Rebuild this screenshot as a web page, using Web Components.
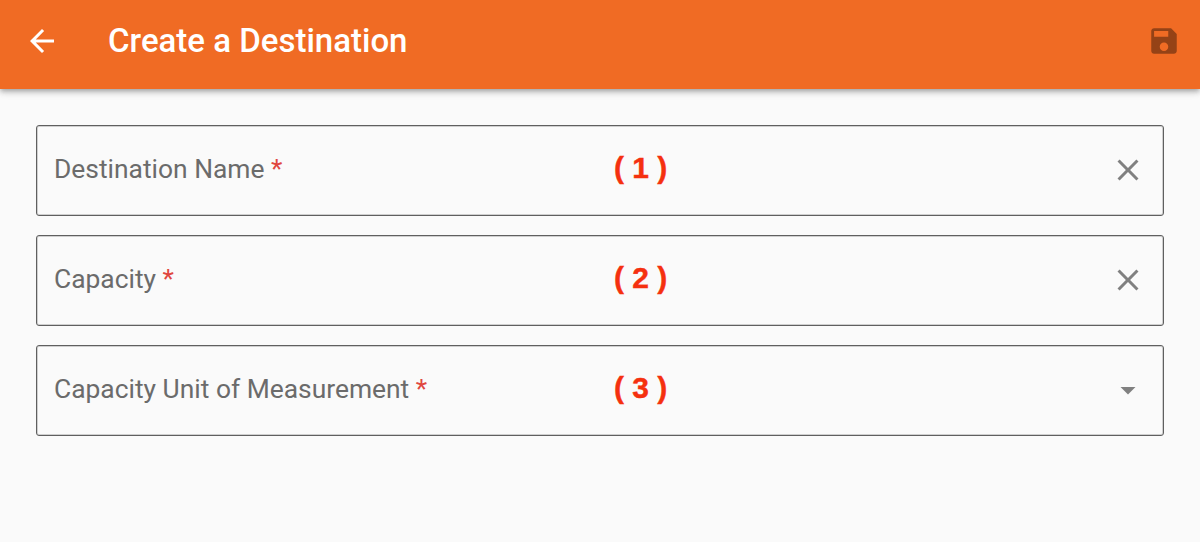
<!DOCTYPE html>
<html>
<head>
<meta charset="utf-8">
<title>Create a Destination</title>
<style>
  html, body { height: 100%; }
  body {
    margin: 0;
    background: #fafafa;
    font-family: Roboto, 'Liberation Sans', sans-serif;
    overflow: hidden;
  }
</style>
</head>
<body>
<app-bar>Create a Destination</app-bar>
<form-body>
  <form-field label="Destination Name" mark="( 1 )" trailing="clear"></form-field>
  <form-field label="Capacity" mark="( 2 )" trailing="clear"></form-field>
  <form-field label="Capacity Unit of Measurement" mark="( 3 )" trailing="dropdown"></form-field>
</form-body>

<template id="app-bar-tmpl">
  <style>
    :host {
      display: flex;
      align-items: center;
      height: 89px;
      padding: 0 24px 8px 24px;
      box-sizing: border-box;
      background: #f06b24;
      color: #fff;
      box-shadow: 0 2px 4px -1px rgba(0,0,0,.2), 0 4px 5px 0 rgba(0,0,0,.14), 0 1px 10px 0 rgba(0,0,0,.12);
      position: relative;
    }
    .back { width: 36px; height: 36px; display: block; fill: #fff; flex: none; }
    .title {
      margin-left: 48px;
      flex: 1;
      font-size: 33px;
      font-weight: 500;
      white-space: nowrap;
    }
    .save { width: 34px; height: 34px; display: block; fill: rgba(0,0,0,.38); flex: none; margin-right: -5px; }
  </style>
  <svg class="back" viewBox="0 0 24 24"><path d="M20 11H7.83l5.59-5.59L12 4l-8 8 8 8 1.41-1.41L7.83 13H20v-2z"/></svg>
  <span class="title"><slot></slot></span>
  <svg class="save" viewBox="0 0 24 24"><path d="M17 3H5c-1.11 0-2 .9-2 2v14c0 1.1.89 2 2 2h14c1.1 0 2-.9 2-2V7l-4-4zm-5 16c-1.66 0-3-1.34-3-3s1.34-3 3-3 3 1.34 3 3-1.34 3-3 3zm3-10H5V5h10v4z"/></svg>
</template>

<template id="form-body-tmpl">
  <style>
    :host {
      display: flex;
      flex-direction: column;
      gap: 19.5px;
      padding: 36px 36px 0;
    }
  </style>
  <slot></slot>
</template>

<template id="form-field-tmpl">
  <style>
    :host {
      display: grid;
      grid-template-columns: 560px auto 1fr;
      align-items: center;
      height: 90.5px;
      box-sizing: border-box;
      padding: 0 18px 0 17px;
      border: 1px solid #5f5f5f;
      box-shadow: inset 0 0 0 1px rgba(110,110,110,.3);
      border-radius: 3px;
    }
    .label { font-size: 26.4px; color: #6b6b6b; white-space: nowrap; padding-bottom: 3px; }
    .req { color: #e0473f; }
    .mark {
      font-family: 'Liberation Sans', Arial, sans-serif;
      font-size: 30px;
      font-weight: 700;
      color: #f5300f;
      white-space: nowrap;
      padding-bottom: 4px;
      -webkit-text-stroke: .4px #f5300f;
    }
    .trail { justify-self: end; display: flex; }
    svg { width: 36px; height: 36px; display: block; fill: #808080; margin-right: -1px; }
  </style>
  <span class="label"><span class="name"></span> <span class="req">*</span></span>
  <span class="mark"></span>
  <span class="trail"></span>
</template>

<script>
  const icons = {
    clear: '<svg viewBox="0 0 24 24"><path d="M19 6.41L17.59 5 12 10.59 6.41 5 5 6.41 10.59 12 5 17.59 6.41 19 12 13.41 17.59 19 19 17.59 13.41 12z"/></svg>',
    dropdown: '<svg viewBox="0 0 24 24"><path d="M7 10l5 5 5-5z"/></svg>'
  };

  function stamp(el, id) {
    const shadowRoot = el.attachShadow({mode: 'open'});
    shadowRoot.appendChild(document.getElementById(id).content.cloneNode(true));
    return shadowRoot;
  }

  customElements.define('app-bar', class extends HTMLElement {
    constructor() {
      super();
      stamp(this, 'app-bar-tmpl');
    }
  });

  customElements.define('form-body', class extends HTMLElement {
    constructor() {
      super();
      stamp(this, 'form-body-tmpl');
    }
  });

  customElements.define('form-field', class extends HTMLElement {
    connectedCallback() {
      const root = this.shadowRoot || stamp(this, 'form-field-tmpl');
      root.querySelector('.name').textContent = this.getAttribute('label');
      root.querySelector('.mark').textContent = this.getAttribute('mark');
      root.querySelector('.trail').innerHTML = icons[this.getAttribute('trailing')];
    }
  });
</script>
</body>
</html>
